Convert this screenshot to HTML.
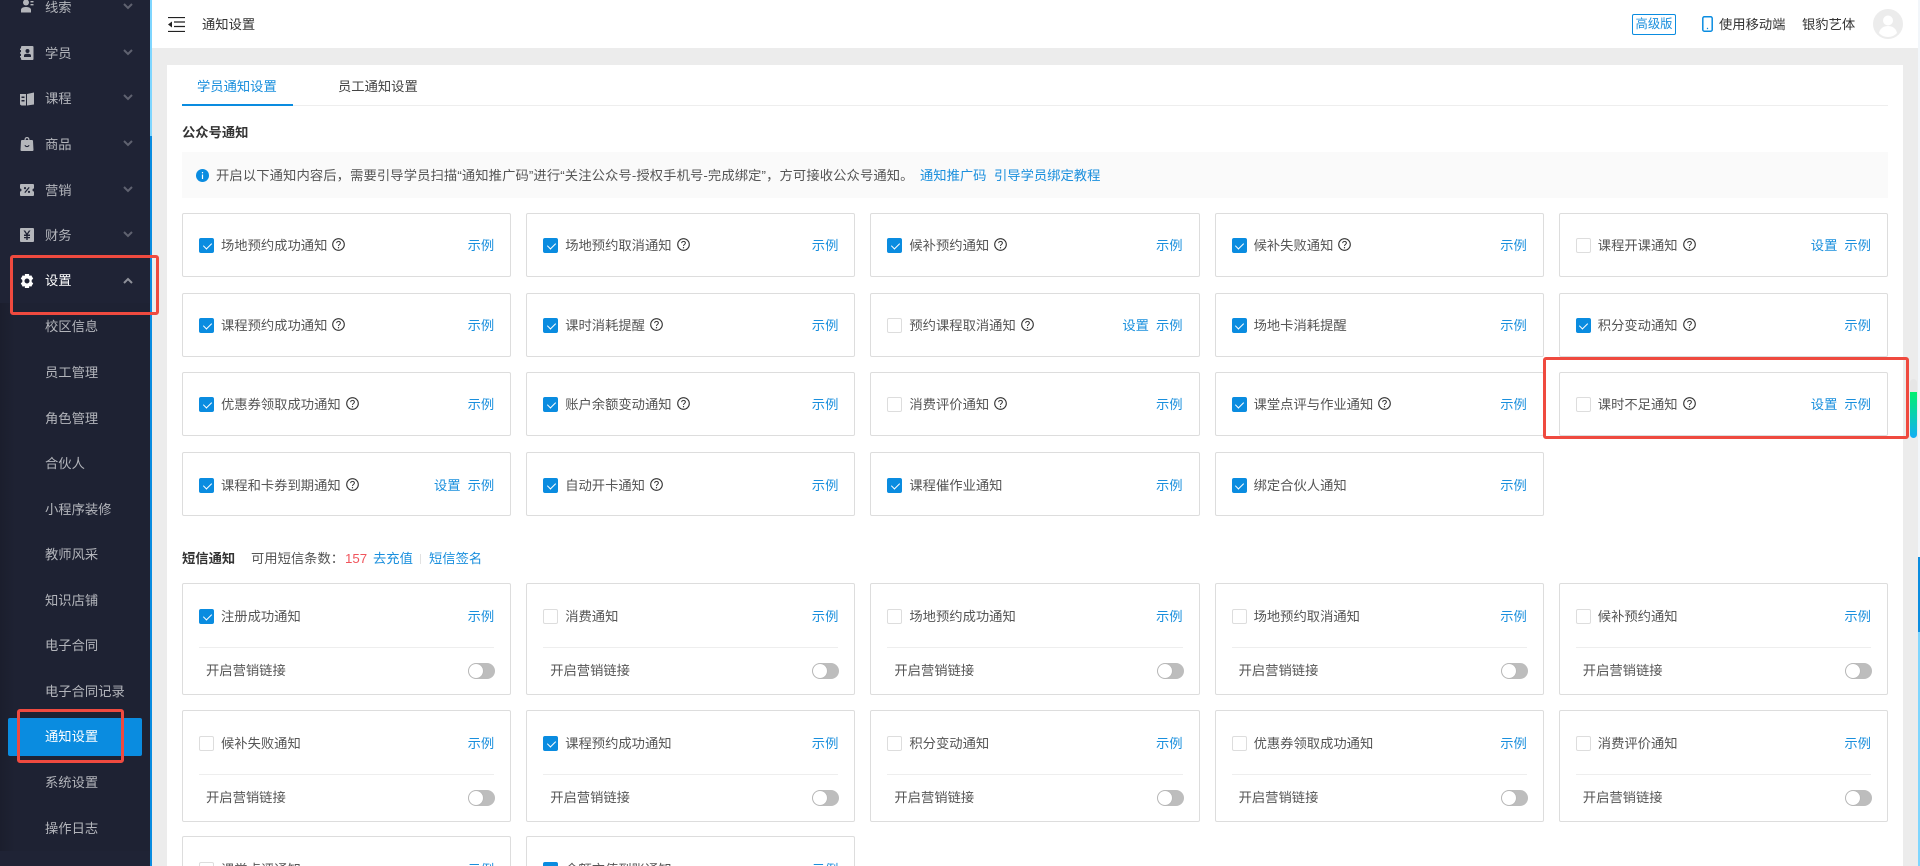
<!DOCTYPE html>
<html lang="zh-CN"><head><meta charset="utf-8"><title>通知设置</title>
<style>
*{box-sizing:border-box;margin:0;padding:0}
html,body{width:1920px;height:866px;overflow:hidden;background:#ececec}
body{position:relative;font-family:"Liberation Sans","Noto Sans CJK SC",sans-serif;font-size:13.3px;color:#555}
.a{position:absolute}
.t{position:absolute;line-height:20px;white-space:nowrap}
a{color:#1a8fdd;text-decoration:none}
#side{left:0;top:0;width:150px;height:866px;background:#1f2335}
#sub{left:0;top:303px;width:150px;height:548px;background:linear-gradient(90deg,#1b1e2d,#1e2233 10%)}
.m{left:45px;color:#b3b5bb}
.m.w{color:#fff}
.ic{position:absolute;left:20px;width:14px;height:14px;fill:#b4b6bb}
.ch{position:absolute;left:123px;width:10px;height:7px;fill:none;stroke:#5f6270;stroke-width:2}
.card{position:absolute;width:329.2px;height:64px;background:#fff;border:1px solid #ddd;border-radius:2px}
.card.s{height:112px}
.c1{left:182px}.c2{left:526.2px}.c3{left:870.4px}.c4{left:1214.6px}.c5{left:1558.8px}
.r{position:absolute;left:16px;top:22px;height:20px;display:flex;align-items:center;line-height:20px;white-space:nowrap}
.cb{display:block;width:15px;height:15px;border:1px solid #ddd;border-radius:2px;background:#fff;margin-right:7px;position:relative;margin-top:-1px}
.cb.on{background:#0a8ce0;border-color:#0a8ce0}
.cb.on:after{content:"";position:absolute;left:4.5px;top:2px;width:4px;height:7px;border:solid #fff;border-width:0 1.2px 1.2px 0;transform:rotate(45deg)}
.q{width:13px;height:13px;margin-left:5px;margin-top:-3px;flex:none}
.l{position:absolute;right:16px;top:22px;line-height:20px;white-space:nowrap}
.l a+a{margin-left:7px}
.s .r,.s .l,.p4 .r,.p4 .l{top:23px}
.d{position:absolute;left:16px;right:16px;top:63px;height:1px;background:#eee}
.k{position:absolute;left:23px;top:77px;line-height:20px;white-space:nowrap}
.sw{position:absolute;right:15px;top:79px;width:27px;height:16px;border-radius:8px;background:#bdbdbd}
.sw:after{content:"";position:absolute;left:1px;top:1px;width:14px;height:14px;border-radius:50%;background:#fff;box-shadow:0 0 1px #999}
.red{position:absolute;border:3px solid #ef4a3f;border-radius:3px}
b{font-weight:700;color:#333}
</style></head><body>
<svg width="0" height="0" style="position:absolute"><defs>
<symbol id="h" viewBox="0 0 13 13"><circle cx="6.5" cy="6.5" r="5.8" fill="none" stroke="#333" stroke-width="1.1"/><path d="M4.7 5.1c0-2.2 3.7-2.200 3.700-.1 0 1.400-1.900 1.400-1.900 3" fill="none" stroke="#333" stroke-width="1"/><circle cx="6.500" cy="9.700" r=".65" fill="#333"/></symbol>
</defs></svg>

<div class="a" id="side"></div>
<div class="a" id="sub"></div>
<div class="a" style="left:150px;top:0;width:2px;height:136px;background:#7fd6ff"></div>
<div class="a" style="left:150px;top:136px;width:2px;height:730px;background:#0a8ce0"></div>

<svg class="ic" style="top:-1px" viewBox="0 0 14 14"><circle cx="6" cy="3.500" r="3"/><path d="M1 13.500V11c0-2 2-3 5-3s5 1 5 3v2.500z"/><path d="M10.500 2h3v1.400h-3zM10.500 5h3v1.400h-3z"/></svg>
<svg class="ic" style="top:46px" viewBox="0 0 14 14"><path fill-rule="evenodd" d="M2 0h10.500a1 1 0 0 1 1 1v12a1 1 0 0 1-1 1H2a1 1 0 0 1-1-1v-1.500H0v-1.500h1V7.700H0V6.200h1V4H0V2.500h1V1a1 1 0 0 1 1-1zM7.500 3a2 2 0 1 0 0 4 2 2 0 0 0 0-4zM4 11h7V9.500C11 8.300 9.500 7.800 7.500 7.800S4 8.300 4 9.500z"/></svg>
<svg class="ic" style="top:92px" viewBox="0 0 14 14"><path fill-rule="evenodd" d="M0 2h6v11.500H1.500L0 12.500zM7 2l7-1.500V12.500l-7 1zM1.500 4.500v1.500h3V4.500zM1.500 8v1.500h3V8z"/></svg>
<svg class="ic" style="top:137px" viewBox="0 0 14 14"><path fill-rule="evenodd" d="M4.500 3C4.500 1 5.500 0 7 0s2.500 1 2.500 3h2.500a1 1 0 0 1 1 1l.500 9a1 1 0 0 1-1 1H1.500a1 1 0 0 1-1-1l.500-9a1 1 0 0 1 1-1zM5.700 3h2.600C8.300 2 8 1.200 7 1.200S5.700 2 5.700 3zM4.500 8.300c.5 2.500 4.500 2.500 5 0l-1-.3c-.4 1.400-2.600 1.400-3 0z"/></svg>
<svg class="ic" style="top:183px" viewBox="0 0 14 14"><path fill-rule="evenodd" d="M1 1h12a1 1 0 0 1 1 1v3.500a1.500 1.500 0 0 0 0 3V12a1 1 0 0 1-1 1H1a1 1 0 0 1-1-1V8.500a1.500 1.500 0 0 0 0-3V2a1 1 0 0 1 1-1zM4.300 9.300l1 .7 4.400-5.300-1-.7zM5 4a1.100 1.100 0 1 0 0 2.200A1.100 1.100 0 0 0 5 4zM9 7.800a1.100 1.100 0 1 0 0 2.200 1.100 1.100 0 0 0 0-2.200z"/></svg>
<svg class="ic" style="top:228px" viewBox="0 0 14 14"><path fill-rule="evenodd" d="M1 0h12a1 1 0 0 1 1 1v12a1 1 0 0 1-1 1H1a1 1 0 0 1-1-1V1a1 1 0 0 1 1-1zM3.500 2.500L6.200 6.500H4V8h2.300v1H4v1.300h2.300V12h1.400v-1.700H10V9H7.700V8H10V6.500H7.800l2.700-4H8.900L7 5.400 5.100 2.500z"/></svg>
<svg class="ic" style="top:274px;left:19.500px;fill:#fff" viewBox="0 0 14 14"><path fill-rule="evenodd" d="M5 0h4l.5 2 1.700-.8 2 3.400-1.500 1.400v2l1.500 1.400-2 3.400-1.700-.8L9 14H5l-.5-2-1.700.8-2-3.400L2.300 8V6L.8 4.600l2-3.400 1.700.8zM7 4.500a2.500 2.500 0 1 0 0 5 2.500 2.500 0 0 0 0-5z"/></svg>

<svg class="ch" style="top:3px" viewBox="0 0 10 7"><path d="M1 1l4 4 4-4"/></svg>
<svg class="ch" style="top:49px" viewBox="0 0 10 7"><path d="M1 1l4 4 4-4"/></svg>
<svg class="ch" style="top:94px" viewBox="0 0 10 7"><path d="M1 1l4 4 4-4"/></svg>
<svg class="ch" style="top:140px" viewBox="0 0 10 7"><path d="M1 1l4 4 4-4"/></svg>
<svg class="ch" style="top:186px" viewBox="0 0 10 7"><path d="M1 1l4 4 4-4"/></svg>
<svg class="ch" style="top:231px" viewBox="0 0 10 7"><path d="M1 1l4 4 4-4"/></svg>
<svg class="ch" style="top:277px;stroke:#8f919a" viewBox="0 0 10 7"><path d="M1 6l4-4 4 4"/></svg>

<div class="t m" style="top:-2px">线索</div>
<div class="t m" style="top:44px">学员</div>
<div class="t m" style="top:89px">课程</div>
<div class="t m" style="top:135px">商品</div>
<div class="t m" style="top:181px">营销</div>
<div class="t m" style="top:226px">财务</div>
<div class="t m w" style="top:271px">设置</div>
<div class="t m" style="top:317px">校区信息</div>
<div class="t m" style="top:363px">员工管理</div>
<div class="t m" style="top:409px">角色管理</div>
<div class="t m" style="top:454px">合伙人</div>
<div class="t m" style="top:500px">小程序装修</div>
<div class="t m" style="top:545px">教师风采</div>
<div class="t m" style="top:591px">知识店铺</div>
<div class="t m" style="top:636px">电子合同</div>
<div class="t m" style="top:682px">电子合同记录</div>
<div class="a" style="left:8px;top:718px;width:134px;height:38px;background:#0a8ce0;border-radius:2px"></div>
<div class="t m w" style="top:727px">通知设置</div>
<div class="t m" style="top:773px">系统设置</div>
<div class="t m" style="top:819px">操作日志</div>

<!-- header -->
<div class="a" style="left:152px;top:0;width:1766px;height:48px;background:#fff"></div>
<svg class="a" style="left:168px;top:17px" width="17" height="15" viewBox="0 0 17 15"><path d="M0 .5h17M6 5h11M6 9.500h11M0 14.500h17" stroke="#222" stroke-width="1.200" fill="none"/><path d="M4 4.500v6L0 7.500z" fill="#222"/></svg>
<div class="t" style="left:202px;top:15px;color:#333">通知设置</div>
<div class="a" style="left:1632px;top:14px;width:44px;height:21px;border:1px solid #0a8ce0;border-radius:2px;color:#1a8fdd;text-align:center;line-height:19px;font-size:12.3px;white-space:nowrap">高级版</div>
<svg class="a" style="left:1702px;top:16px" width="11" height="16" viewBox="0 0 11 16"><rect x=".8" y=".8" width="9.400" height="14.400" rx="1.500" fill="none" stroke="#0a8ce0" stroke-width="1.500"/><circle cx="5.500" cy="12.500" r=".7" fill="#0a8ce0"/></svg>
<div class="t" style="left:1719px;top:15px;color:#333">使用移动端</div>
<div class="t" style="left:1802px;top:15px;color:#333">银豹艺体</div>
<svg class="a" style="left:1873px;top:9px" width="30" height="30" viewBox="0 0 30 30"><circle cx="15" cy="15" r="15" fill="#ececec"/><circle cx="15" cy="11.500" r="5" fill="#fff"/><path d="M6 24c1-5 5-7 9-7s8 2 9 7c-2 2.500-5.500 4-9 4s-7-1.500-9-4z" fill="#fff"/></svg>

<!-- panel -->
<div class="a" style="left:167px;top:65px;width:1736px;height:801px;background:#fff"></div>
<div class="a" style="left:182px;top:105px;width:1706px;height:1px;background:#eee"></div>
<div class="a" style="left:182px;top:104px;width:111px;height:2px;background:#0a8ce0"></div>
<div class="t" style="left:197px;top:77px;color:#1a8fdd">学员通知设置</div>
<div class="t" style="left:338px;top:77px;color:#444">员工通知设置</div>
<div class="t" style="left:182px;top:123px"><b>公众号通知</b></div>
<div class="a" style="left:182px;top:152px;width:1706px;height:46px;background:#fafafa"></div>
<svg class="a" style="left:196px;top:169px" width="13" height="13" viewBox="0 0 13 13"><circle cx="6.500" cy="6.500" r="6.500" fill="#0a8ce0"/><rect x="5.900" y="5.500" width="1.200" height="4.500" fill="#fff"/><rect x="5.900" y="3" width="1.200" height="1.300" fill="#fff"/></svg>
<div class="t" style="left:216px;top:166px;letter-spacing:.11px">开启以下通知内容后，需要引导学员扫描“通知推广码”进行“关注公众号-授权手机号-完成绑定”，方可接收公众号通知。</div>
<a class="t" style="left:920px;top:166px">通知推广码</a>
<a class="t" style="left:994px;top:166px">引导学员绑定教程</a>

<!-- public cards -->
<div class="card c1" style="top:213px"><div class="r"><i class="cb on"></i>场地预约成功通知<svg class="q"><use href="#h"/></svg></div><div class="l"><a>示例</a></div></div>
<div class="card c2" style="top:213px"><div class="r"><i class="cb on"></i>场地预约取消通知<svg class="q"><use href="#h"/></svg></div><div class="l"><a>示例</a></div></div>
<div class="card c3" style="top:213px"><div class="r"><i class="cb on"></i>候补预约通知<svg class="q"><use href="#h"/></svg></div><div class="l"><a>示例</a></div></div>
<div class="card c4" style="top:213px"><div class="r"><i class="cb on"></i>候补失败通知<svg class="q"><use href="#h"/></svg></div><div class="l"><a>示例</a></div></div>
<div class="card c5" style="top:213px"><div class="r"><i class="cb"></i>课程开课通知<svg class="q"><use href="#h"/></svg></div><div class="l"><a>设置</a><a>示例</a></div></div>

<div class="card c1" style="top:293px"><div class="r"><i class="cb on"></i>课程预约成功通知<svg class="q"><use href="#h"/></svg></div><div class="l"><a>示例</a></div></div>
<div class="card c2" style="top:293px"><div class="r"><i class="cb on"></i>课时消耗提醒<svg class="q"><use href="#h"/></svg></div><div class="l"><a>示例</a></div></div>
<div class="card c3" style="top:293px"><div class="r"><i class="cb"></i>预约课程取消通知<svg class="q"><use href="#h"/></svg></div><div class="l"><a>设置</a><a>示例</a></div></div>
<div class="card c4" style="top:293px"><div class="r"><i class="cb on"></i>场地卡消耗提醒</div><div class="l"><a>示例</a></div></div>
<div class="card c5" style="top:293px"><div class="r"><i class="cb on"></i>积分变动通知<svg class="q"><use href="#h"/></svg></div><div class="l"><a>示例</a></div></div>

<div class="card c1" style="top:372px"><div class="r"><i class="cb on"></i>优惠券领取成功通知<svg class="q"><use href="#h"/></svg></div><div class="l"><a>示例</a></div></div>
<div class="card c2" style="top:372px"><div class="r"><i class="cb on"></i>账户余额变动通知<svg class="q"><use href="#h"/></svg></div><div class="l"><a>示例</a></div></div>
<div class="card c3" style="top:372px"><div class="r"><i class="cb"></i>消费评价通知<svg class="q"><use href="#h"/></svg></div><div class="l"><a>示例</a></div></div>
<div class="card c4" style="top:372px"><div class="r"><i class="cb on"></i>课堂点评与作业通知<svg class="q"><use href="#h"/></svg></div><div class="l"><a>示例</a></div></div>
<div class="card c5" style="top:372px"><div class="r"><i class="cb"></i>课时不足通知<svg class="q"><use href="#h"/></svg></div><div class="l"><a>设置</a><a>示例</a></div></div>

<div class="card p4 c1" style="top:452px"><div class="r"><i class="cb on"></i>课程和卡券到期通知<svg class="q"><use href="#h"/></svg></div><div class="l"><a>设置</a><a>示例</a></div></div>
<div class="card p4 c2" style="top:452px"><div class="r"><i class="cb on"></i>自动开卡通知<svg class="q"><use href="#h"/></svg></div><div class="l"><a>示例</a></div></div>
<div class="card p4 c3" style="top:452px"><div class="r"><i class="cb on"></i>课程催作业通知</div><div class="l"><a>示例</a></div></div>
<div class="card p4 c4" style="top:452px"><div class="r"><i class="cb on"></i>绑定合伙人通知</div><div class="l"><a>示例</a></div></div>

<!-- sms -->
<div class="t" style="left:182px;top:549px"><b>短信通知</b></div>
<div class="t" style="left:251px;top:549px">可用短信条数：</div>
<div class="t" style="left:345px;top:549px;color:#f0545c">157</div>
<a class="t" style="left:373px;top:549px">去充值</a>
<div class="a" style="left:420px;top:554px;width:1px;height:10px;background:#e2e2e2"></div>
<a class="t" style="left:429px;top:549px">短信签名</a>

<div class="card s c1" style="top:583px"><div class="r"><i class="cb on"></i>注册成功通知</div><div class="l"><a>示例</a></div><div class="d"></div><div class="k">开启营销链接</div><div class="sw"></div></div>
<div class="card s c2" style="top:583px"><div class="r"><i class="cb"></i>消费通知</div><div class="l"><a>示例</a></div><div class="d"></div><div class="k">开启营销链接</div><div class="sw"></div></div>
<div class="card s c3" style="top:583px"><div class="r"><i class="cb"></i>场地预约成功通知</div><div class="l"><a>示例</a></div><div class="d"></div><div class="k">开启营销链接</div><div class="sw"></div></div>
<div class="card s c4" style="top:583px"><div class="r"><i class="cb"></i>场地预约取消通知</div><div class="l"><a>示例</a></div><div class="d"></div><div class="k">开启营销链接</div><div class="sw"></div></div>
<div class="card s c5" style="top:583px"><div class="r"><i class="cb"></i>候补预约通知</div><div class="l"><a>示例</a></div><div class="d"></div><div class="k">开启营销链接</div><div class="sw"></div></div>

<div class="card s c1" style="top:710px"><div class="r"><i class="cb"></i>候补失败通知</div><div class="l"><a>示例</a></div><div class="d"></div><div class="k">开启营销链接</div><div class="sw"></div></div>
<div class="card s c2" style="top:710px"><div class="r"><i class="cb on"></i>课程预约成功通知</div><div class="l"><a>示例</a></div><div class="d"></div><div class="k">开启营销链接</div><div class="sw"></div></div>
<div class="card s c3" style="top:710px"><div class="r"><i class="cb"></i>积分变动通知</div><div class="l"><a>示例</a></div><div class="d"></div><div class="k">开启营销链接</div><div class="sw"></div></div>
<div class="card s c4" style="top:710px"><div class="r"><i class="cb"></i>优惠券领取成功通知</div><div class="l"><a>示例</a></div><div class="d"></div><div class="k">开启营销链接</div><div class="sw"></div></div>
<div class="card s c5" style="top:710px"><div class="r"><i class="cb"></i>消费评价通知</div><div class="l"><a>示例</a></div><div class="d"></div><div class="k">开启营销链接</div><div class="sw"></div></div>

<div class="card s c1" style="top:836px;height:30px;border-bottom:0;border-radius:2px 2px 0 0"><div class="r"><i class="cb"></i>课堂点评通知</div><div class="l"><a>示例</a></div></div>
<div class="card s c2" style="top:836px;height:30px;border-bottom:0;border-radius:2px 2px 0 0"><div class="r"><i class="cb on"></i>余额充值到账通知</div><div class="l"><a>示例</a></div></div>

<!-- scrollbar & strip -->
<div class="a" style="left:1910px;top:379px;width:7px;height:59px;border-radius:4px;background:linear-gradient(180deg,#e6e6e6 0,#e6e6e6 22%,#00f070 22%,#14aef5 100%)"></div>
<div class="a" style="left:1918px;top:0;width:2px;height:557px;background:#f2f6fa"></div>
<div class="a" style="left:1918px;top:557px;width:2px;height:75px;background:#0a8ce0"></div>
<div class="a" style="left:1918px;top:632px;width:2px;height:234px;background:#7fd6ff"></div>

<!-- annotations -->
<div class="red" style="left:10px;top:255px;width:149px;height:60px"></div>
<div class="red" style="left:17px;top:709px;width:107px;height:54px"></div>
<div class="red" style="left:1543px;top:357px;width:366px;height:82px"></div>
</body></html>
